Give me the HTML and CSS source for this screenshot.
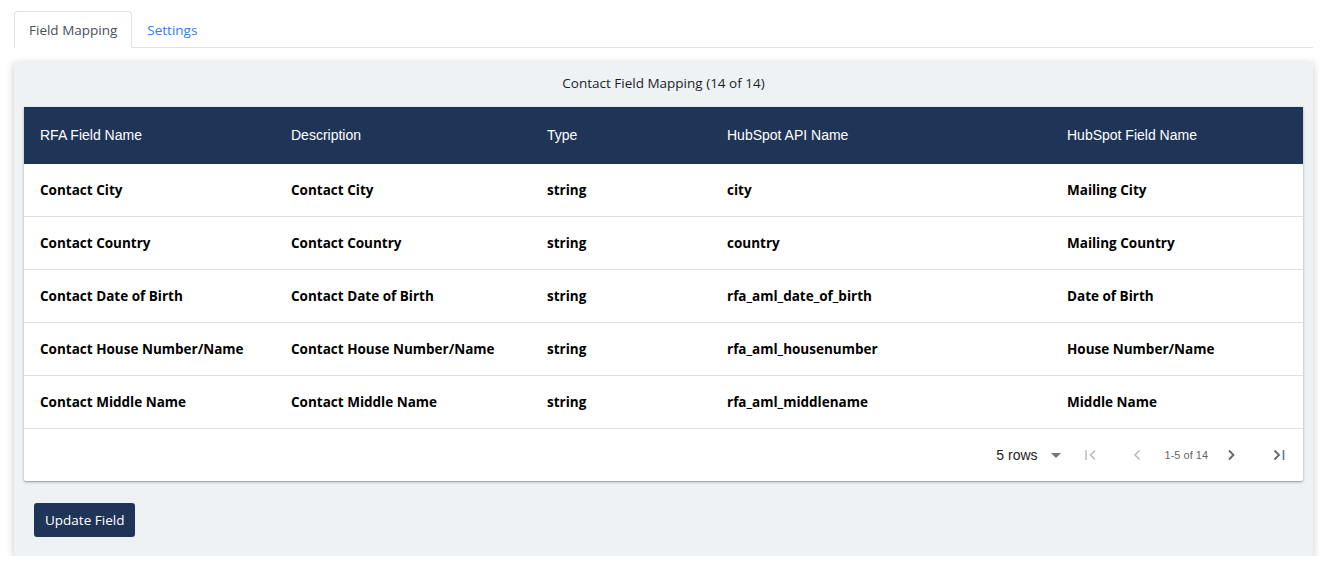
FILE: index.html
```html
<!DOCTYPE html>
<html>
<head>
<meta charset="utf-8">
<link rel="stylesheet" href="styles.css">
</head>
<body>
<div class="page">
  <div class="tabs">
    <div class="tab active">Field Mapping</div>
    <div class="tab">Settings</div>
  </div>
  <div class="panel">
    <div class="panel-title">Contact Field Mapping (14 of 14)</div>
    <div class="paper">
      <table class="grid">
        <colgroup>
          <col class="c1"><col class="c2"><col class="c3"><col class="c4"><col class="c5">
        </colgroup>
        <thead>
          <tr><th>RFA Field Name</th><th>Description</th><th>Type</th><th>HubSpot API Name</th><th>HubSpot Field Name</th></tr>
        </thead>
        <tbody>
          <tr><td>Contact City</td><td>Contact City</td><td>string</td><td>city</td><td>Mailing City</td></tr>
          <tr><td>Contact Country</td><td>Contact Country</td><td>string</td><td>country</td><td>Mailing Country</td></tr>
          <tr><td>Contact Date of Birth</td><td>Contact Date of Birth</td><td>string</td><td>rfa_aml_date_of_birth</td><td>Date of Birth</td></tr>
          <tr><td>Contact House Number/Name</td><td>Contact House Number/Name</td><td>string</td><td>rfa_aml_housenumber</td><td>House Number/Name</td></tr>
          <tr><td>Contact Middle Name</td><td>Contact Middle Name</td><td>string</td><td>rfa_aml_middlename</td><td>Middle Name</td></tr>
        </tbody>
      </table>
      <div class="pager">
        <div class="rows">5 rows
          <svg class="caret" width="10" height="5" viewBox="0 0 10 5"><path d="M0 0h10L5 5z" fill="#757575"/></svg>
        </div>
        <svg class="pbtn first" width="14" height="14" viewBox="0 0 14 14"><path d="M2 2v10" stroke="#c8bfc2" stroke-width="1.6" fill="none"/><path d="M11 2.5L6.5 7 11 11.5" stroke="#bbb" stroke-width="1.6" fill="none"/></svg>
        <svg class="pbtn prev" width="10" height="14" viewBox="0 0 10 14"><path d="M7.5 2.5L3 7l4.5 4.5" stroke="#bbb" stroke-width="1.6" fill="none"/></svg>
        <span class="range">1-5 of 14</span>
        <svg class="pbtn next" width="10" height="14" viewBox="0 0 10 14"><path d="M3 2.5L7.5 7 3 11.5" stroke="#666" stroke-width="1.8" fill="none"/></svg>
        <svg class="pbtn last" width="14" height="14" viewBox="0 0 14 14"><path d="M2.5 2.5L7 7l-4.5 4.5" stroke="#666" stroke-width="1.8" fill="none"/><path d="M11.5 2v10" stroke="#5577aa" stroke-width="1.6" fill="none"/></svg>
      </div>
    </div>
    <div class="actions">
      <button class="btn">Update Field</button>
    </div>
  </div>
</div>
</body>
</html>
```
FILE: styles.css
```css
html, body { margin: 0; padding: 0; background: #fff; }
body { font-family: "Open Sans", "Noto Sans", sans-serif; }
.page { padding: 11px 11px 0 14px; }
.tabs {
  display: flex;
  border-bottom: 1px solid #dee2e6;
  height: 36px;
}
.tab {
  font-size: 13.5px;
  padding: 0 14px;
  line-height: 36px;
  color: #2f7cf6;
  border: 1px solid transparent;
  border-radius: 4px 4px 0 0;
  margin-bottom: -1px;
}
.tab.active {
  color: #495057;
  border-color: #dee2e6 #dee2e6 #fff;
  background: #fff;
  padding: 0 14px;
}
.panel {
  margin-top: 14px;
  background: #eff2f5;
  box-shadow: 0 2px 8px rgba(0,0,0,0.22);
  padding: 0 10px 19px;
}
.panel-title {
  text-align: center;
  font-size: 13.5px;
  color: #1b1f24;
  height: 45px;
  line-height: 42px;
}
.paper {
  background: #fff;
  box-shadow: 0 1px 3px rgba(0,0,0,0.3), 0 1px 1px rgba(0,0,0,0.12);
  border-radius: 2px;
}
.grid { width: 100%; border-collapse: collapse; table-layout: fixed; }
.c1 { width: 251px; } .c2 { width: 256px; } .c3 { width: 180px; } .c4 { width: 340px; }
.grid th {
  background: #1f3557;
  color: #fff;
  font-family: "Liberation Sans", Arial, sans-serif;
  font-weight: normal;
  font-size: 14px;
  text-align: left;
  height: 55px;
  padding: 0 16px 2px;
}
.grid td {
  font-weight: bold;
  font-size: 13.5px;
  color: #000;
  height: 52px;
  padding: 0 16px;
  border-bottom: 1px solid #e0e0e0;
}
.pager {
  height: 52px;
  display: flex;
  align-items: center;
  justify-content: flex-end;
  font-family: "Liberation Sans", Arial, sans-serif;
  padding-right: 17px;
}
.rows {
  font-size: 14px;
  color: #222;
  display: flex;
  align-items: center;
  margin-right: 23px;
}
.caret { margin-left: 13px; }
.pbtn { display: block; }
.first { margin-right: 34px; }
.prev { margin-right: 23px; }
.range { font-size: 11px; color: #666; margin-right: 18px; }
.next { margin-right: 36px; }
.btn {
  background: #1f3557;
  color: #fff;
  border: none;
  border-radius: 3px;
  font-family: "Open Sans", "Noto Sans", sans-serif;
  font-size: 13.5px;
  height: 34px;
  padding: 0 11px;
  margin: 22px 0 0 10px;
}
.actions { display: flex; }
```
